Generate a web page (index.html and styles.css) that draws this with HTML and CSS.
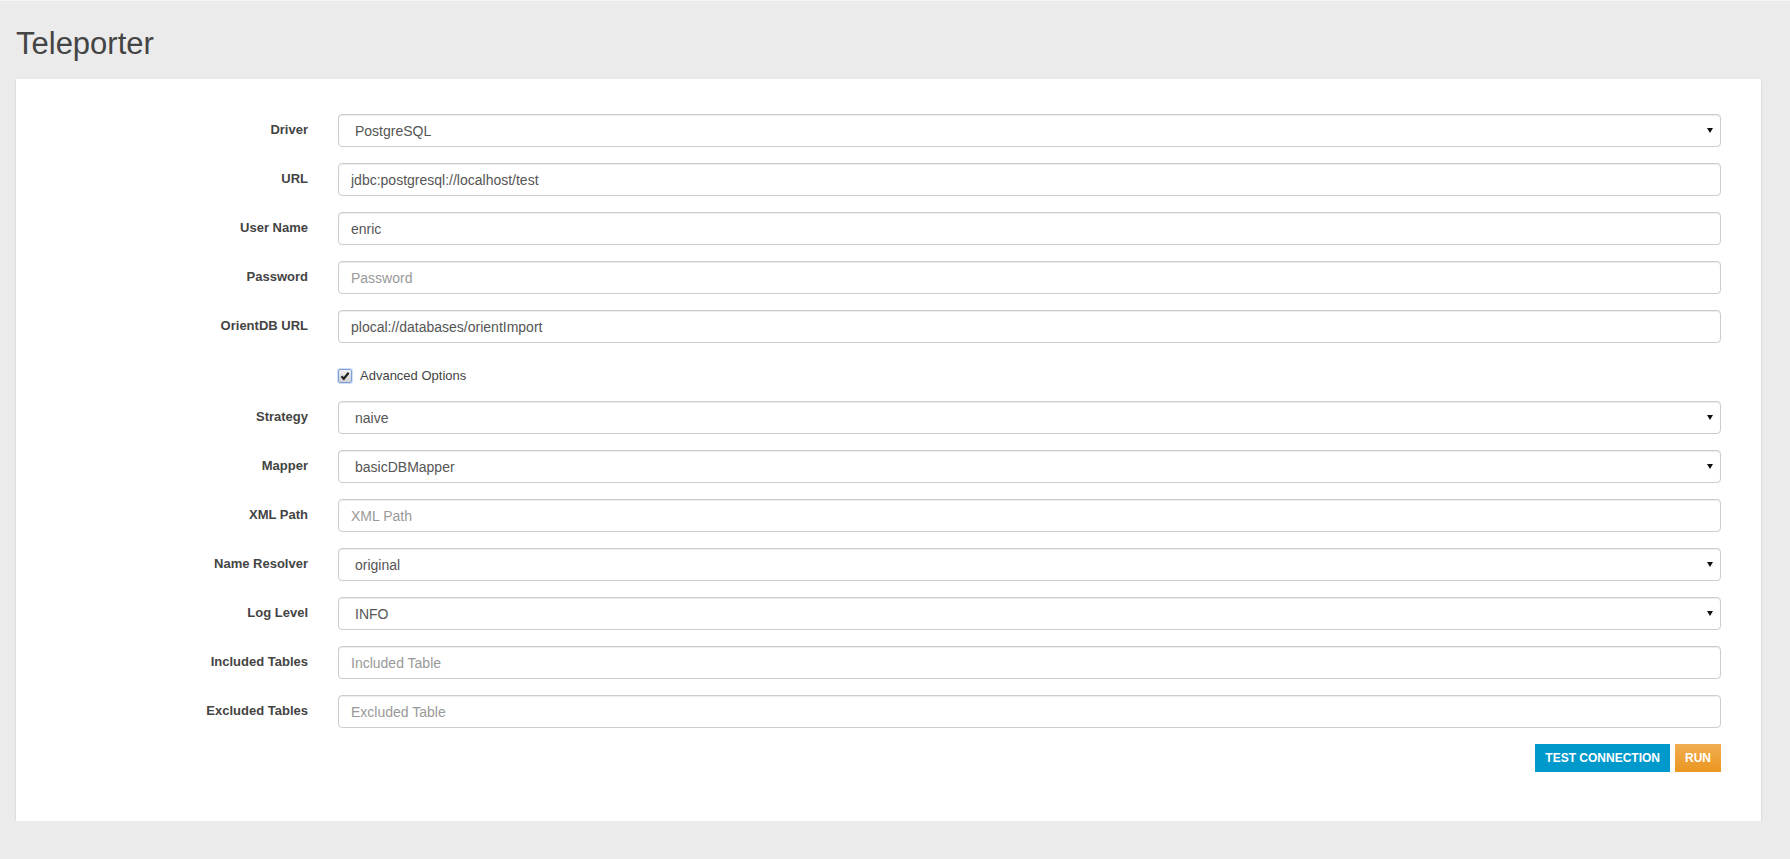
FILE: index.html
```html
<!doctype html>
<html lang="en">
<head>
<meta charset="utf-8">
<title>Teleporter</title>
<meta name="viewport" content="width=device-width, initial-scale=1">
<link rel="stylesheet" href="styles.css">
</head>
<body>

  <div id="page">
    <h3 class="title">Teleporter</h3>

    <div class="panel">
      <form class="form">

        <div class="group">
          <label class="label">Driver</label>
          <div class="select-wrap">
            <select class="control">
              <option>PostgreSQL</option>
              <option>MySQL</option>
              <option>Oracle</option>
            </select>
          </div>
        </div>

        <div class="group">
          <label class="label">URL</label>
          <input class="control" type="text" value="jdbc:postgresql://localhost/test">
        </div>

        <div class="group">
          <label class="label">User Name</label>
          <input class="control" type="text" value="enric">
        </div>

        <div class="group">
          <label class="label">Password</label>
          <input class="control" type="password" placeholder="Password">
        </div>

        <div class="group">
          <label class="label">OrientDB URL</label>
          <input class="control" type="text" value="plocal://databases/orientImport">
        </div>

        <div class="group">
          <span></span>
          <label class="checkbox">
            <span class="check">
              <svg width="10" height="10" viewBox="0 0 10 10"><path d="M1.5 5.2 L3.8 7.8 L8.6 1.8" fill="none" stroke="#222" stroke-width="2.2"/></svg>
            </span>
            Advanced Options
          </label>
        </div>

        <div class="group">
          <label class="label">Strategy</label>
          <div class="select-wrap">
            <select class="control">
              <option>naive</option>
              <option>naive-aggregate</option>
            </select>
          </div>
        </div>

        <div class="group">
          <label class="label">Mapper</label>
          <div class="select-wrap">
            <select class="control">
              <option>basicDBMapper</option>
              <option>hibernate</option>
            </select>
          </div>
        </div>

        <div class="group">
          <label class="label">XML Path</label>
          <input class="control" type="text" placeholder="XML Path">
        </div>

        <div class="group">
          <label class="label">Name Resolver</label>
          <div class="select-wrap">
            <select class="control">
              <option>original</option>
              <option>java</option>
            </select>
          </div>
        </div>

        <div class="group">
          <label class="label">Log Level</label>
          <div class="select-wrap">
            <select class="control">
              <option>INFO</option>
              <option>DEBUG</option>
              <option>ERROR</option>
              <option>NO</option>
            </select>
          </div>
        </div>

        <div class="group">
          <label class="label">Included Tables</label>
          <input class="control" type="text" placeholder="Included Table">
        </div>

        <div class="group">
          <label class="label">Excluded Tables</label>
          <input class="control" type="text" placeholder="Excluded Table">
        </div>

        <div class="actions">
          <button type="button" class="btn btn-test">Test Connection</button>
          <button type="button" class="btn btn-run">Run</button>
        </div>

      </form>
    </div>
  </div>

</body>
</html>
```

FILE: styles.css
```css
* { box-sizing: border-box; }

body {
  background-color: #ebebeb;
  color: #444;
  font-family: "Liberation Sans", Arial, sans-serif;
  font-size: 13px;
  margin: 0;
  border-top: 1px solid #f5f5f5;
}

#page {
  padding: 0 29px 0 16px;
}

.title {
  font-size: 31px;
  font-weight: normal;
  line-height: 33px;
  color: #444;
  margin: 26px 0 19px 0;
}

.panel {
  background-color: #fff;
  box-shadow: 0 1px 2px rgba(0, 0, 0, 0.18);
  padding: 35px 40px 49px 40px;
}

.group {
  display: grid;
  grid-template-columns: 252px 1fr;
  column-gap: 30px;
  margin-bottom: 16px;
}

.label {
  text-align: right;
  font-weight: bold;
  color: #444;
  line-height: 18px;
  padding-top: 7px;
}

.control {
  display: block;
  width: 100%;
  height: 33px;
  padding: 6px 12px;
  font-family: inherit;
  font-size: 14px;
  color: #555;
  background-color: #fff;
  border: 1px solid #ccc;
  border-radius: 4px;
  box-shadow: inset 0 1px 1px rgba(0, 0, 0, 0.075);
  outline: none;
}

.control::placeholder {
  color: #999;
}

.select-wrap {
  position: relative;
}

.select-wrap select {
  -webkit-appearance: none;
  appearance: none;
  padding-left: 16px;
}

/* the little black arrow of the old chrome select */
.select-wrap::after {
  content: "";
  position: absolute;
  right: 8px;
  top: 14px;
  border-left: 3px solid transparent;
  border-right: 3px solid transparent;
  border-top: 5px solid #111;
  pointer-events: none;
}

.checkbox {
  display: flex;
  align-items: flex-start;
  height: 26px;
  padding-top: 9px;
  line-height: 16px;
  color: #444;
}

.check {
  display: inline-flex;
  align-items: center;
  justify-content: center;
  width: 14px;
  height: 14px;
  margin-top: 1px;
  margin-right: 8px;
  border: 1px solid #7d9fdc;
  border-radius: 2px;
  background: linear-gradient(#f0f0f0, #d2d2d2);
  box-shadow: 0 0 0 1px rgba(125, 160, 225, 0.35);
}

.actions {
  display: flex;
  justify-content: flex-end;
  gap: 5px;
}

.btn {
  font-family: inherit;
  font-size: 12px;
  font-weight: bold;
  text-transform: uppercase;
  color: #fff;
  line-height: 18px;
  height: 28px;
  padding: 5px 10px;
  border: none;
  border-radius: 0;
  cursor: pointer;
}

.btn-test {
  background-color: #0099cb;
}

.btn-run {
  background: linear-gradient(#f1ae52, #eb961f);
}
```
